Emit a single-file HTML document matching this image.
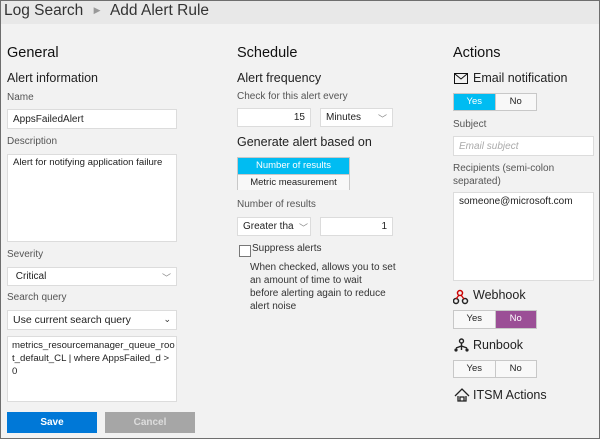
<!DOCTYPE html>
<html><head><style>
body{margin:0;width:600px;height:439px;overflow:hidden;font-family:"Liberation Sans",sans-serif;}
.f{position:absolute;left:0;top:0;width:598px;height:437px;border:1px solid #6e6e6e;background:#f2f2f2;}
.hd{position:absolute;left:0;top:0;width:598px;height:23px;background:#e8e8e8;}
.a{position:absolute;white-space:nowrap;color:#222;}
.h1{font-size:14.5px;color:#111;}
.h2{font-size:12.5px;color:#222;}
.l{font-size:10px;color:#555;}
.in{position:absolute;background:#fff;border:1px solid #dcdcdc;box-sizing:border-box;font-size:10px;color:#222;padding:2px 5px;white-space:nowrap;overflow:hidden;}
.tg{position:absolute;display:flex;border:1px solid #c8c8c8;box-sizing:border-box;font-size:9.5px;}
.tg div{flex:1;text-align:center;background:#f8f8f8;color:#222;line-height:15px}
.tg div+div{border-left:1px solid #c8c8c8}
.chev{position:absolute;right:5px;top:3px;font-size:9px;color:#888}
</style></head><body><div class="f">
<div class="hd"></div>
<div class="a" style="left:3px;top:1px;font-size:15.5px;color:#333">Log Search <span style="font-size:9px;color:#999;margin:0 6px;position:relative;top:-2px">▶</span> Add Alert Rule</div>

<div class="a h1" style="left:6px;top:44px">General</div>
<div class="a h2" style="left:6px;top:70px">Alert information</div>
<div class="a l" style="left:6px;top:91px">Name</div>
<div class="in" style="left:6px;top:108px;width:170px;height:20px;padding-top:4px">AppsFailedAlert</div>
<div class="a l" style="left:6px;top:135px">Description</div>
<div class="in" style="left:6px;top:153px;width:170px;height:88px;font-size:9.6px">Alert for notifying application failure</div>
<div class="a l" style="left:6px;top:248px">Severity</div>
<div class="in" style="left:6px;top:266px;width:170px;height:19px;padding-top:3px">&nbsp;Critical<span class="chev">﹀</span></div>
<div class="a l" style="left:6px;top:291px">Search query</div>
<div class="in" style="left:6px;top:309px;width:170px;height:20px;font-size:10.5px;padding-top:3px">Use current search query<span class="chev" style="color:#333;top:3px">⌄</span></div>
<div class="in" style="left:6px;top:335px;width:170px;height:66px;line-height:13px;font-size:9.6px;padding-left:4px">metrics_resourcemanager_queue_roo<br>t_default_CL | where AppsFailed_d &gt;<br>0</div>
<div class="a" style="left:6px;top:411px;width:90px;height:21px;background:#0078d7;color:#fff;font-size:10px;font-weight:bold;text-align:center;line-height:21px">Save</div>
<div class="a" style="left:104px;top:411px;width:90px;height:21px;background:#a6a6a6;color:#ddd;font-size:10px;font-weight:bold;text-align:center;line-height:21px">Cancel</div>

<div class="a h1" style="left:236px;top:44px">Schedule</div>
<div class="a h2" style="left:236px;top:70px">Alert frequency</div>
<div class="a l" style="left:236px;top:90px">Check for this alert every</div>
<div class="in" style="left:236px;top:107px;width:74px;height:19px;text-align:right;padding-top:3px">15</div>
<div class="in" style="left:319px;top:107px;width:73px;height:19px;padding-top:3px">Minutes<span class="chev">﹀</span></div>
<div class="a h2" style="left:236px;top:134px">Generate alert based on</div>
<div class="a" style="left:236px;top:156px;width:113px;height:33px;border:1px solid #c8c8c8;box-sizing:border-box;font-size:9.5px;text-align:center">
<div style="background:#00bcf2;color:#fff;line-height:16px">Number of results</div>
<div style="background:#f8f8f8;line-height:15px;border-top:1px solid #c8c8c8">Metric measurement</div></div>
<div class="a l" style="left:236px;top:198px">Number of results</div>
<div class="in" style="left:236px;top:216px;width:74px;height:19px;padding-top:3px">Greater tha<span class="chev" style="right:2px">﹀</span></div>
<div class="in" style="left:319px;top:216px;width:73px;height:19px;text-align:right;padding-top:3px">1</div>
<div class="a" style="left:238px;top:244px;width:10px;height:10px;border:1px solid #777;background:#fff"></div>
<div class="a l" style="left:251px;top:242px;color:#333">Suppress alerts</div>
<div class="a l" style="left:249px;top:260px;color:#333;line-height:13px">When checked, allows you to set<br>an amount of time to wait<br>before alerting again to reduce<br>alert noise</div>

<div class="a h1" style="left:452px;top:44px">Actions</div>
<svg class="a" style="left:453px;top:72px" width="14" height="11"><rect x="0.5" y="0.5" width="13" height="10" fill="none" stroke="#111"/><path d="M1 1 L7 6 L13 1" fill="none" stroke="#111"/></svg>
<div class="a h2" style="left:472px;top:70px">Email notification</div>
<div class="tg" style="left:452px;top:92px;width:84px;height:18px"><div style="background:#00bcf2;color:#fff">Yes</div><div>No</div></div>
<div class="a l" style="left:452px;top:118px">Subject</div>
<div class="in" style="left:452px;top:135px;width:141px;height:20px;color:#aaa;font-style:italic;padding-top:4px">Email subject</div>
<div class="a l" style="left:452px;top:161px;line-height:13px">Recipients (semi-colon<br>separated)</div>
<div class="in" style="left:452px;top:191px;width:141px;height:89px;padding-top:3px">someone@microsoft.com</div>
<svg class="a" style="left:452px;top:288px" width="16" height="16"><circle cx="7" cy="4" r="2.5" fill="none" stroke="#c00" stroke-width="1.5"/><circle cx="3" cy="12" r="2.5" fill="none" stroke="#222" stroke-width="1.5"/><circle cx="12" cy="12" r="2.5" fill="none" stroke="#222" stroke-width="1.5"/><path d="M6 6 L3 10 M8 6 L11 10" stroke="#c00" stroke-width="1.3"/></svg>
<div class="a h2" style="left:472px;top:287px">Webhook</div>
<div class="tg" style="left:452px;top:309px;width:84px;height:19px"><div>Yes</div><div style="background:#9b4f96;color:#fff">No</div></div>
<svg class="a" style="left:453px;top:337px" width="15" height="15"><circle cx="7.5" cy="3" r="2" fill="none" stroke="#222" stroke-width="1.4"/><path d="M7.5 5 V9 M2 10 L7.5 8 L13 10 M7.5 9 V12" stroke="#222" stroke-width="1.4" fill="none"/><circle cx="2" cy="12" r="1.6" fill="#222"/><circle cx="13" cy="12" r="1.6" fill="#222"/></svg>
<div class="a h2" style="left:472px;top:337px">Runbook</div>
<div class="tg" style="left:452px;top:359px;width:84px;height:18px"><div>Yes</div><div>No</div></div>
<svg class="a" style="left:453px;top:387px" width="16" height="14"><path d="M1 8 L8 1 L15 8 M4 8 V13 H12 V8 M6 13 V9 H10 V13" fill="none" stroke="#222" stroke-width="1.3"/></svg>
<div class="a h2" style="left:472px;top:387px">ITSM Actions</div>
</div></body></html>
